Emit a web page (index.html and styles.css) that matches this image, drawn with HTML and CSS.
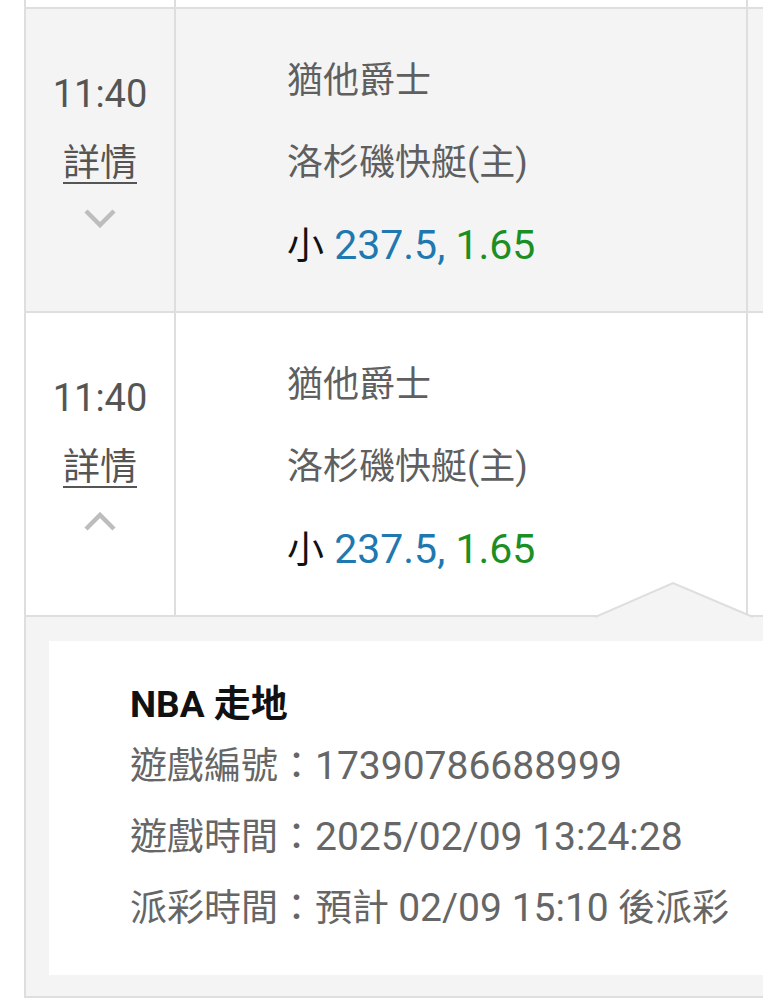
FILE: index.html
```html
<!DOCTYPE html>
<html lang="zh-Hant">
<head>
  <meta charset="UTF-8" />
  <meta name="viewport" content="width=device-width, initial-scale=1.0"/>
  <title>注單詳情</title>
  <link rel="stylesheet" href="styles.css">
</head>
<body>
  <div class="page">
    <div class="bet-table">
      <div class="row row-top">
        <div class="cell"></div>
        <div class="cell"></div>
        <div class="cell"></div>
      </div>

      <div class="row row-bet shaded">
        <div class="cell cell-time">
          <div class="time">11:40</div>
          <a class="more-link" href="#">詳情</a>
          <svg class="chevron" width="34" height="20" viewBox="0 0 34 20">
            <polyline points="3,3 17,17 31,3" />
          </svg>
        </div>
        <div class="cell cell-match">
          <div class="team">猶他爵士</div>
          <div class="team">洛杉磯快艇(主)</div>
          <div class="pick"><span class="side">小</span> <span class="line">237.5,</span> <span class="odds">1.65</span></div>
        </div>
        <div class="cell"></div>
      </div>

      <div class="row row-bet">
        <div class="cell cell-time">
          <div class="time">11:40</div>
          <a class="more-link" href="#">詳情</a>
          <svg class="chevron" width="34" height="20" viewBox="0 0 34 20">
            <polyline points="3,17 17,3 31,17" />
          </svg>
        </div>
        <div class="cell cell-match">
          <div class="team">猶他爵士</div>
          <div class="team">洛杉磯快艇(主)</div>
          <div class="pick"><span class="side">小</span> <span class="line">237.5,</span> <span class="odds">1.65</span></div>
        </div>
        <div class="cell"></div>
      </div>

      <!-- expanded details for the second bet -->
      <div class="detail">
        <svg class="notch" width="160" height="38" viewBox="0 0 160 38">
          <polygon class="notch-fill" points="0,38 0,36 78,2 158,36 158,38" />
          <polyline class="notch-edge" points="0,36 78,2 158,36" />
        </svg>
        <div class="detail-box">
          <div class="detail-title">NBA 走地</div>
          <div class="detail-line">遊戲編號：<span class="num">17390786688999</span></div>
          <div class="detail-line">遊戲時間：<span class="num">2025/02/09 13:24:28</span></div>
          <div class="detail-line">派彩時間：預計 <span class="num">02/09 15:10</span> 後派彩</div>
        </div>
      </div>
    </div>
  </div>
</body>
</html>
```

FILE: styles.css
```css
body {
  margin: 0;
  background: #fff;
  font-family: Roboto, "Noto Sans CJK TC", sans-serif;
  color: #5c5c5c;
  overflow: hidden;
}
.page { padding-left: 24px; }
.bet-table {
  width: 820px;
  border-left: 2px solid #dedede;
  border-bottom: 2px solid #dedede;
}
.row {
  display: grid;
  grid-template-columns: 150px 572px 1fr;
  border-bottom: 2px solid #dedede;
}
.row-top { height: 7px; }
.row-bet { height: 302px; }
.shaded { background: #f4f4f4; }
.cell { border-right: 2px solid #dedede; }

.cell-time {
  display: flex;
  flex-direction: column;
  align-items: center;
  font-size: 38px;
  color: #555;
}
.time {
  margin-top: 61px;
  line-height: 48px;
}
.more-link {
  margin-top: 22px;
  line-height: 48px;
  font-size: 37px;
  color: #555;
  text-decoration: underline;
  text-decoration-thickness: 2px;
  text-underline-offset: 6px;
}
.chevron {
  margin-top: 20px;
  fill: none;
  stroke: #bdbdbd;
  stroke-width: 4.5;
}

.cell-match {
  padding: 31px 0 0 111px;
  font-size: 36px;
  line-height: 82px;
  color: #5f5f5f;
}
.pick { font-size: 41px; }
.side { color: #111; font-size: 37px; }
.line { color: #1f78b0; }
.odds { color: #1b8f24; }

.detail {
  position: relative;
  background: #f4f4f4;
  padding: 24px 0 21px 23px;
}
.notch {
  position: absolute;
  left: 569px;
  top: -36px;
}
.notch-fill { fill: #f4f4f4; }
.notch-edge {
  fill: none;
  stroke: #dedede;
  stroke-width: 2;
}
.detail-box {
  background: #fff;
  height: 334px;
  box-sizing: border-box;
  padding: 38px 0 0 81px;
}
.detail-title {
  font-size: 37px;
  font-weight: bold;
  color: #111;
  line-height: 52px;
}
.detail-line {
  font-size: 37px;
  line-height: 71px;
  color: #666;
}
.num { font-size: 39px; }
```
